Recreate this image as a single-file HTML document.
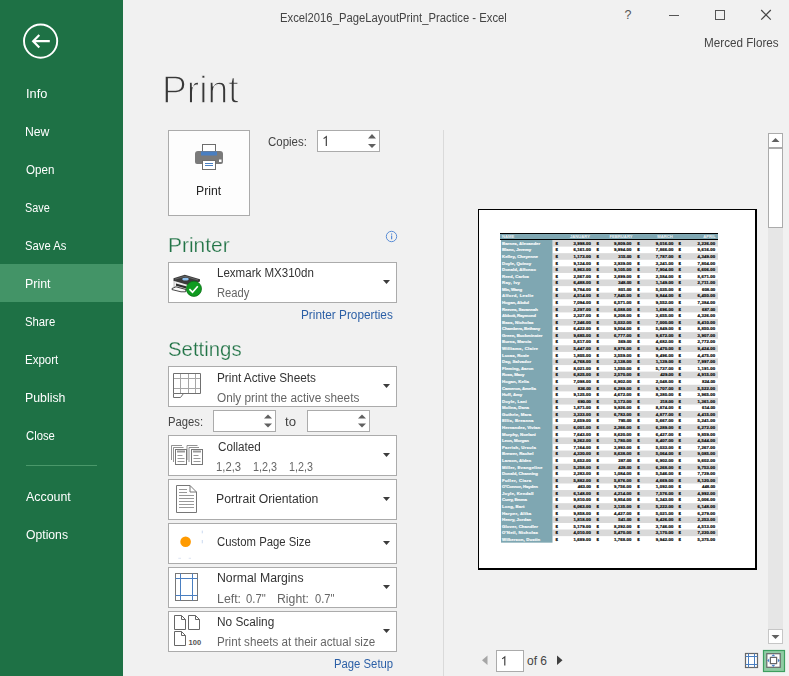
<!DOCTYPE html>
<html><head><meta charset="utf-8"><title>Print</title>
<style>
html,body{margin:0;padding:0;}
body{width:789px;height:676px;position:relative;overflow:hidden;background:#F1F1F1;font-family:"Liberation Sans", sans-serif;}
.t{position:absolute;white-space:nowrap;}
</style></head><body>
<div style="position:absolute;left:0;top:0;width:123px;height:676px;background:#1E7145"></div>
<div style="position:absolute;left:0;top:264px;width:123px;height:38px;background:#439467"></div>
<svg style="position:absolute;left:0;top:0" width="123" height="80"><circle cx="40.6" cy="41.1" r="16.6" fill="none" stroke="#fff" stroke-width="1.9"/><path d="M33.5 41.2 H49.8 M39.3 35 L33.2 41.2 L39.3 47.4" fill="none" stroke="#fff" stroke-width="2.2"/></svg>
<div class="t" id="sb0" style="left:25.60px;top:86.64px;font-size:12px;line-height:14px;color:#fff;transform:scaleX(1.0645);transform-origin:0 0;">Info</div>
<div class="t" id="sb1" style="left:25.28px;top:125.28px;font-size:12px;line-height:14px;color:#fff;transform:scaleX(1.0183);transform-origin:0 0;">New</div>
<div class="t" id="sb2" style="left:26.32px;top:163.20px;font-size:12px;line-height:14px;color:#fff;transform:scaleX(0.9655);transform-origin:0 0;">Open</div>
<div class="t" id="sb3" style="left:25.36px;top:201.36px;font-size:12px;line-height:14px;color:#fff;transform:scaleX(0.9052);transform-origin:0 0;">Save</div>
<div class="t" id="sb4" style="left:24.80px;top:238.64px;font-size:12px;line-height:14px;color:#fff;transform:scaleX(0.9373);transform-origin:0 0;">Save As</div>
<div class="t" id="sb5" style="left:25.28px;top:277.36px;font-size:12px;line-height:14px;color:#fff;transform:scaleX(1.0348);transform-origin:0 0;">Print</div>
<div class="t" id="sb6" style="left:25.28px;top:315.28px;font-size:12px;line-height:14px;color:#fff;transform:scaleX(0.9425);transform-origin:0 0;">Share</div>
<div class="t" id="sb7" style="left:25.28px;top:353.28px;font-size:12px;line-height:14px;color:#fff;transform:scaleX(0.9595);transform-origin:0 0;">Export</div>
<div class="t" id="sb8" style="left:25.28px;top:391.28px;font-size:12px;line-height:14px;color:#fff;transform:scaleX(1.0270);transform-origin:0 0;">Publish</div>
<div class="t" id="sb9" style="left:26.08px;top:429.28px;font-size:12px;line-height:14px;color:#fff;transform:scaleX(0.9403);transform-origin:0 0;">Close</div>
<div style="position:absolute;left:26px;top:465px;width:71px;height:1px;background:#4A986A"></div>
<div class="t" id="sbacc" style="left:26.00px;top:489.64px;font-size:12px;line-height:14px;color:#fff;transform:scaleX(1.0323);transform-origin:0 0;">Account</div>
<div class="t" id="sbopt" style="left:26.40px;top:527.64px;font-size:12px;line-height:14px;color:#fff;transform:scaleX(1.0149);transform-origin:0 0;">Options</div>
<div class="t" id="title" style="left:279.80px;top:10.54px;font-size:12px;line-height:14px;color:#444;transform:scaleX(0.9392);transform-origin:0 0;">Excel2016_PageLayoutPrint_Practice - Excel</div>
<div class="t" style="left:428.00px;width:400px;text-align:center;top:8.17px;font-size:12.5px;line-height:15px;color:#555;">?</div>
<svg style="position:absolute;left:660px;top:0" width="129" height="30"><path d="M9 15.5 H19" stroke="#555" stroke-width="1"/><rect x="55.5" y="10.5" width="9" height="9" fill="none" stroke="#555" stroke-width="1"/><path d="M101.2 10 L110.8 19.6 M110.8 10 L101.2 19.6" stroke="#444" stroke-width="1.2"/></svg>
<div class="t" id="user" style="left:704.20px;top:35.54px;font-size:12px;line-height:14px;color:#444;transform:scaleX(0.9739);transform-origin:0 0;">Merced Flores</div>
<div class="t" id="bigprint" style="left:161.60px;top:66.01px;font-size:39.5px;line-height:47px;color:#383838;transform:scaleX(0.9440);transform-origin:0 0;-webkit-text-stroke:1.3px #F1F1F1;">Print</div>
<div style="position:absolute;left:168px;top:130px;width:80px;height:84px;border:1px solid #ABABAB;background:#FDFDFD"></div>
<svg style="position:absolute;left:190px;top:140px" width="40" height="35">
<rect x="12.5" y="4.5" width="13" height="9" fill="#fff" stroke="#6d6d6d" stroke-width="1"/>
<path d="M8 11 H30 Q33 11 33 14 V22 Q33 24 31 24 H7 Q5 24 5 22 V14 Q5 11 8 11 Z" fill="#7a7a7a"/>
<rect x="11" y="11.5" width="16" height="4" fill="#4a7fc1"/>
<rect x="12.5" y="20.5" width="13" height="9" fill="#fff" stroke="#6d6d6d" stroke-width="1"/>
<path d="M15 23.5 H23 M15 25.5 H23" stroke="#4a7fc1" stroke-width="1"/>
<rect x="29" y="19.5" width="2.5" height="2.5" fill="#fff"/>
</svg>
<div class="t" id="btnprint" style="left:195.80px;top:183.87px;font-size:12.5px;line-height:15px;color:#262626;transform:scaleX(0.9772);transform-origin:0 0;">Print</div>
<div class="t" id="copies" style="left:267.80px;top:134.84px;font-size:12px;line-height:14px;color:#444;transform:scaleX(0.9553);transform-origin:0 0;">Copies:</div>
<div style="position:absolute;left:317px;top:130px;width:61px;height:20px;border:1px solid #ABABAB;background:#fff"></div>
<svg style="position:absolute;left:320px;top:134px" width="10" height="14"><path d="M3.6 4.6 L6.3 2.6 V12" fill="none" stroke="#3a3a3a" stroke-width="1.15"/></svg>
<svg style="position:absolute;left:365px;top:131px" width="14" height="20"><path d="M3 7.5 L7 3 L11 7.5 Z M3 13 L7 17 L11 13 Z" fill="#606060"/></svg>
<div style="position:absolute;left:443px;top:130px;width:1px;height:546px;background:#DADADA"></div>
<div class="t" id="hprinter" style="left:167.60px;top:231.82px;font-size:21px;line-height:25px;color:#217346;transform:scaleX(0.9972);transform-origin:0 0;-webkit-text-stroke:0.25px #F1F1F1;">Printer</div>
<svg style="position:absolute;left:384px;top:229px" width="15" height="15"><circle cx="7.5" cy="7.5" r="5.2" fill="none" stroke="#5A8DD6" stroke-width="1"/><rect x="7" y="6.5" width="1.2" height="3.8" fill="#5A8DD6"/><rect x="7" y="4.5" width="1.2" height="1.2" fill="#5A8DD6"/></svg>
<div style="position:absolute;left:168px;top:262px;width:227px;height:39px;border:1px solid #ABABAB;background:#fff"></div>
<svg style="position:absolute;left:382px;top:280px" width="10" height="6"><path d="M1 0 H8 L4.5 3.9 Z" fill="#3c3c3c"/></svg>
<svg style="position:absolute;left:168px;top:266px" width="40" height="34">
<path d="M6 21 L6 14 L21 18.5 L21 24.5 Z" fill="#eeeeee" stroke="#9a9a9a" stroke-width="0.6"/>
<path d="M8 17.5 L18 20.3 L18 22.6 L8 19.8 Z" fill="#2e2e2e"/>
<path d="M5.5 12.3 L16.8 8.8 L32 13.3 L32 15.6 L21 19.2 L5.5 14.8 Z" fill="#3b3b3b"/>
<path d="M7 13.2 L17 10.3 L30 14" fill="none" stroke="#777" stroke-width="0.7"/>
<ellipse cx="17.5" cy="13.2" rx="3.2" ry="1.4" fill="#8fc2f0"/>
<path d="M4 22.5 L8 20.8 L18 23.5 L17.5 25.8 L13 25.8 L4 23.6 Z" fill="#fafafa" stroke="#333" stroke-width="0.9"/>
<circle cx="25.9" cy="22.8" r="7.6" fill="#0f9b20" stroke="#0b6f17" stroke-width="0.8"/>
<path d="M21.4 23.2 L24.5 26.2 L29.8 20.2" fill="none" stroke="#fff" stroke-width="1.7"/>
</svg>
<div class="t" id="lex" style="left:216.60px;top:266.34px;font-size:12px;line-height:14px;color:#333;transform:scaleX(0.9617);transform-origin:0 0;">Lexmark MX310dn</div>
<div class="t" id="ready" style="left:217.00px;top:286.24px;font-size:12px;line-height:14px;color:#666;transform:scaleX(0.9356);transform-origin:0 0;">Ready</div>
<div class="t" id="pprops" style="left:301.20px;top:308.24px;font-size:12px;line-height:14px;color:#2B5FA6;transform:scaleX(0.9831);transform-origin:0 0;">Printer Properties</div>
<div class="t" id="hsettings" style="left:167.60px;top:336.22px;font-size:21px;line-height:25px;color:#217346;transform:scaleX(0.9704);transform-origin:0 0;-webkit-text-stroke:0.25px #F1F1F1;">Settings</div>
<div style="position:absolute;left:168px;top:366px;width:227px;height:39px;border:1px solid #ABABAB;background:#fff"></div>
<svg style="position:absolute;left:382px;top:384px" width="10" height="6"><path d="M1 0 H8 L4.5 3.9 Z" fill="#3c3c3c"/></svg>
<svg style="position:absolute;left:170px;top:370px" width="34" height="30">
<path d="M3.5 8.5 H30.5 M3.5 18.5 H30.5 M10.5 3.5 V23.5 M18.5 3.5 V23.5 M25.5 3.5 V23.5" stroke="#a6a6a6" stroke-width="1"/>
<path d="M3.5 3.5 H30.5 V23.5 H3.5 Z M3.5 23.5 V27.5 H10.5 L13.5 23.5" fill="none" stroke="#707070" stroke-width="1"/>
</svg>
<div class="t" id="pas" style="left:216.60px;top:371.04px;font-size:12px;line-height:14px;color:#333;transform:scaleX(0.9821);transform-origin:0 0;">Print Active Sheets</div>
<div class="t" id="opas" style="left:217.40px;top:391.04px;font-size:12px;line-height:14px;color:#666;transform:scaleX(0.9834);transform-origin:0 0;">Only print the active sheets</div>
<div class="t" id="pages" style="left:167.60px;top:414.84px;font-size:12px;line-height:14px;color:#444;transform:scaleX(0.9379);transform-origin:0 0;">Pages:</div>
<div style="position:absolute;left:213px;top:410px;width:61px;height:20px;border:1px solid #ABABAB;background:#fff"></div>
<svg style="position:absolute;left:261px;top:411px" width="14" height="20"><path d="M3 7.5 L7 3.5 L11 7.5 Z M3 12.5 L7 16.5 L11 12.5 Z" fill="#606060"/></svg>
<div style="position:absolute;left:307px;top:410px;width:61px;height:20px;border:1px solid #ABABAB;background:#fff"></div>
<svg style="position:absolute;left:355px;top:411px" width="14" height="20"><path d="M3 7.5 L7 3.5 L11 7.5 Z M3 12.5 L7 16.5 L11 12.5 Z" fill="#606060"/></svg>
<div class="t" id="to" style="left:285.40px;top:415.24px;font-size:12px;line-height:14px;color:#444;transform:scaleX(1.0996);transform-origin:0 0;">to</div>
<div style="position:absolute;left:168px;top:435px;width:227px;height:39px;border:1px solid #ABABAB;background:#fff"></div>
<svg style="position:absolute;left:382px;top:453px" width="10" height="6"><path d="M1 0 H8 L4.5 3.9 Z" fill="#3c3c3c"/></svg>
<svg style="position:absolute;left:170px;top:443px" width="36" height="25">
<g fill="none" stroke="#777" stroke-width="0.8">
<path d="M1.5 17 V2.5 H12"/><path d="M3.5 19 V4.5 H13.5"/><path d="M17 17 V2.5 H27.5"/><path d="M19 19 V4.5 H29"/>
</g>
<rect x="5.5" y="6.5" width="11" height="15" fill="#fff" stroke="#777" stroke-width="1"/>
<rect x="21.5" y="6.5" width="11" height="15" fill="#fff" stroke="#777" stroke-width="1"/>
<path d="M7 8.5 H15 M23 8.5 H31" stroke="#999" stroke-width="2"/><path d="M7.5 12.5 H12.5 M7.5 15.5 H14.5 M7.5 18.5 H14.5 M23.5 12.5 H28.5 M23.5 15.5 H30.5 M23.5 18.5 H30.5" stroke="#999" stroke-width="1"/>
</svg>
<div class="t" id="coll" style="left:217.80px;top:439.64px;font-size:12px;line-height:14px;color:#333;transform:scaleX(0.9727);transform-origin:0 0;">Collated</div>
<div class="t" id="c1" style="left:216.20px;top:459.64px;font-size:12px;line-height:14px;color:#666;transform:scaleX(0.9404);transform-origin:0 0;">1,2,3</div>
<div class="t" id="c2" style="left:253.00px;top:459.64px;font-size:12px;line-height:14px;color:#666;transform:scaleX(0.9016);transform-origin:0 0;">1,2,3</div>
<div class="t" id="c3" style="left:289.00px;top:459.64px;font-size:12px;line-height:14px;color:#666;transform:scaleX(0.8931);transform-origin:0 0;">1,2,3</div>
<div style="position:absolute;left:168px;top:479px;width:227px;height:39px;border:1px solid #ABABAB;background:#fff"></div>
<svg style="position:absolute;left:382px;top:497px" width="10" height="6"><path d="M1 0 H8 L4.5 3.9 Z" fill="#3c3c3c"/></svg>
<svg style="position:absolute;left:172px;top:482px" width="30" height="34">
<path d="M4.5 3.5 H18 L24.5 10 V30.5 H4.5 Z" fill="#fff" stroke="#777" stroke-width="1"/>
<path d="M18 3.5 V10 H24.5" fill="none" stroke="#777" stroke-width="1"/>
<path d="M7 7.5 H15 M7 10.5 H15 M7 13.5 H22 M7 16.5 H22 M7 19.5 H22 M7 22.5 H22 M7 25.5 H22" stroke="#999" stroke-width="1"/>
</svg>
<div class="t" id="port" style="left:216.20px;top:491.64px;font-size:12px;line-height:14px;color:#333;transform:scaleX(1.0162);transform-origin:0 0;">Portrait Orientation</div>
<div style="position:absolute;left:168px;top:523px;width:227px;height:39px;border:1px solid #ABABAB;background:#fff"></div>
<svg style="position:absolute;left:382px;top:541px" width="10" height="6"><path d="M1 0 H8 L4.5 3.9 Z" fill="#3c3c3c"/></svg>
<svg style="position:absolute;left:172px;top:527px" width="34" height="34"><circle cx="13.6" cy="14.7" r="5.3" fill="#FF9A00" style="filter:blur(0.35px)"/><path d="M30.3 3.6 V6.3 M30.3 13 V16.3" stroke="#b5c8ea" stroke-width="0.7"/><path d="M6.3 31.3 H9 M16.7 31.3 H19" stroke="#cfdaee" stroke-width="0.7"/></svg>
<div class="t" id="cps" style="left:217.40px;top:535.24px;font-size:12px;line-height:14px;color:#333;transform:scaleX(0.9430);transform-origin:0 0;">Custom Page Size</div>
<div style="position:absolute;left:168px;top:567px;width:227px;height:39px;border:1px solid #ABABAB;background:#fff"></div>
<svg style="position:absolute;left:382px;top:585px" width="10" height="6"><path d="M1 0 H8 L4.5 3.9 Z" fill="#3c3c3c"/></svg>
<svg style="position:absolute;left:172px;top:570px" width="30" height="34">
<rect x="3.5" y="3.5" width="22" height="27" fill="#fff" stroke="#777" stroke-width="1"/>
<path d="M8.5 3.5 V30.5 M20.5 3.5 V30.5 M3.5 8.5 H25.5 M3.5 25.5 H25.5" stroke="#4a7fc1" stroke-width="1"/>
</svg>
<div class="t" id="nm" style="left:216.60px;top:571.34px;font-size:12px;line-height:14px;color:#333;transform:scaleX(1.0216);transform-origin:0 0;">Normal Margins</div>
<div class="t" id="ml1" style="left:216.60px;top:591.64px;font-size:12px;line-height:14px;color:#666;transform:scaleX(1.0302);transform-origin:0 0;">Left:</div>
<div class="t" id="ml2" style="left:245.80px;top:591.64px;font-size:12px;line-height:14px;color:#666;transform:scaleX(0.9427);transform-origin:0 0;">0.7"</div>
<div class="t" id="ml3" style="left:277.20px;top:591.64px;font-size:12px;line-height:14px;color:#666;transform:scaleX(1.0206);transform-origin:0 0;">Right:</div>
<div class="t" id="ml4" style="left:315.00px;top:591.64px;font-size:12px;line-height:14px;color:#666;transform:scaleX(0.9256);transform-origin:0 0;">0.7"</div>
<div style="position:absolute;left:168px;top:611px;width:227px;height:39px;border:1px solid #ABABAB;background:#fff"></div>
<svg style="position:absolute;left:382px;top:629px" width="10" height="6"><path d="M1 0 H8 L4.5 3.9 Z" fill="#3c3c3c"/></svg>
<svg style="position:absolute;left:170px;top:612px" width="36" height="36">
<g fill="#fff" stroke="#666" stroke-width="1">
<path d="M4.5 3.5 H11.5 L15.5 7.5 V17.5 H4.5 Z M11.5 3.5 V7.5 H15.5"/><path d="M18.5 3.5 H25.5 L29.5 7.5 V17.5 H18.5 Z M25.5 3.5 V7.5 H29.5"/><path d="M4.5 19.5 H11.5 L15.5 23.5 V33.5 H4.5 Z M11.5 19.5 V23.5 H15.5"/>
</g>
<text x="18.6" y="33.2" font-family="Liberation Sans" font-size="7.6" font-weight="bold" fill="#555" textLength="12.6" lengthAdjust="spacingAndGlyphs">100</text>
</svg>
<div class="t" id="ns" style="left:216.60px;top:615.24px;font-size:12px;line-height:14px;color:#333;transform:scaleX(0.9863);transform-origin:0 0;">No Scaling</div>
<div class="t" id="psa" style="left:216.60px;top:634.94px;font-size:12px;line-height:14px;color:#666;transform:scaleX(0.9679);transform-origin:0 0;">Print sheets at their actual size</div>
<div class="t" id="psetup" style="left:333.60px;top:656.84px;font-size:12px;line-height:14px;color:#2B5FA6;transform:scaleX(0.9422);transform-origin:0 0;">Page Setup</div>
<div style="position:absolute;left:478px;top:209px;width:276px;height:358px;border:1px solid #000;border-right-width:2px;border-bottom-width:2px;background:#fff"></div>
<svg style="position:absolute;left:500px;top:233px" width="218" height="310.7" viewBox="0 0 218 310.7">
<rect x="0" y="0" width="218" height="7" fill="#7FA7B2"/>
<rect x="0" y="0" width="218" height="1" fill="#000"/>
<rect x="0" y="6" width="218" height="1" fill="#000"/>
<rect x="52.5" y="7.00" width="165.5" height="6.63" fill="#D9D9D9"/>
<rect x="52.5" y="20.16" width="165.5" height="6.63" fill="#D9D9D9"/>
<rect x="52.5" y="33.32" width="165.5" height="6.63" fill="#D9D9D9"/>
<rect x="52.5" y="46.48" width="165.5" height="6.63" fill="#D9D9D9"/>
<rect x="52.5" y="59.64" width="165.5" height="6.63" fill="#D9D9D9"/>
<rect x="52.5" y="72.80" width="165.5" height="6.63" fill="#D9D9D9"/>
<rect x="52.5" y="85.96" width="165.5" height="6.63" fill="#D9D9D9"/>
<rect x="52.5" y="99.12" width="165.5" height="6.63" fill="#D9D9D9"/>
<rect x="52.5" y="112.28" width="165.5" height="6.63" fill="#D9D9D9"/>
<rect x="52.5" y="125.44" width="165.5" height="6.63" fill="#D9D9D9"/>
<rect x="52.5" y="138.60" width="165.5" height="6.63" fill="#D9D9D9"/>
<rect x="52.5" y="151.76" width="165.5" height="6.63" fill="#D9D9D9"/>
<rect x="52.5" y="164.92" width="165.5" height="6.63" fill="#D9D9D9"/>
<rect x="52.5" y="178.08" width="165.5" height="6.63" fill="#D9D9D9"/>
<rect x="52.5" y="191.24" width="165.5" height="6.63" fill="#D9D9D9"/>
<rect x="52.5" y="204.40" width="165.5" height="6.63" fill="#D9D9D9"/>
<rect x="52.5" y="217.56" width="165.5" height="6.63" fill="#D9D9D9"/>
<rect x="52.5" y="230.72" width="165.5" height="6.63" fill="#D9D9D9"/>
<rect x="52.5" y="243.88" width="165.5" height="6.63" fill="#D9D9D9"/>
<rect x="52.5" y="257.04" width="165.5" height="6.63" fill="#D9D9D9"/>
<rect x="52.5" y="270.20" width="165.5" height="6.63" fill="#D9D9D9"/>
<rect x="52.5" y="283.36" width="165.5" height="6.63" fill="#D9D9D9"/>
<rect x="52.5" y="296.52" width="165.5" height="6.63" fill="#D9D9D9"/>
<rect x="1" y="7.0" width="51.5" height="302.68" fill="#7FA7B2"/>
<g font-family="Liberation Sans" font-weight="bold" font-size="4.6" stroke-width="0.22">
<text x="2" y="5.3" fill="#E8EEF0" font-size="4.2">NAME</text>
<text x="80" y="5.3" fill="#E8EEF0" font-size="4.2" text-anchor="middle">JANUARY</text>
<text x="121" y="5.3" fill="#E8EEF0" font-size="4.2" text-anchor="middle">FEBRUARY</text>
<text x="165" y="5.3" fill="#E8EEF0" font-size="4.2" text-anchor="middle">MARCH</text>
<text x="209.5" y="5.3" fill="#E8EEF0" font-size="4.2" text-anchor="middle">APRIL</text>
<text x="2" y="11.80" fill="#F4F7F8" stroke="#F4F7F8" font-size="4.3" textLength="38.2" lengthAdjust="spacing">Barnes, Alexander</text>
<text x="55.5" y="11.80" fill="#111" stroke="#111" font-size="4.3">$</text>
<text x="73.40" y="11.80" fill="#111" stroke="#111" font-size="4.3" textLength="17.60" lengthAdjust="spacing">3,998.00</text>
<text x="96.5" y="11.80" fill="#111" stroke="#111" font-size="4.3">$</text>
<text x="113.90" y="11.80" fill="#111" stroke="#111" font-size="4.3" textLength="17.60" lengthAdjust="spacing">9,809.00</text>
<text x="137.3" y="11.80" fill="#111" stroke="#111" font-size="4.3">$</text>
<text x="155.80" y="11.80" fill="#111" stroke="#111" font-size="4.3" textLength="17.60" lengthAdjust="spacing">9,016.00</text>
<text x="178.4" y="11.80" fill="#111" stroke="#111" font-size="4.3">$</text>
<text x="197.60" y="11.80" fill="#111" stroke="#111" font-size="4.3" textLength="17.60" lengthAdjust="spacing">2,236.00</text>
<text x="2" y="18.38" fill="#F4F7F8" stroke="#F4F7F8" font-size="4.3" textLength="29.2" lengthAdjust="spacing">Blanc, Jeremy</text>
<text x="55.5" y="18.38" fill="#111" stroke="#111" font-size="4.3">$</text>
<text x="73.40" y="18.38" fill="#111" stroke="#111" font-size="4.3" textLength="17.60" lengthAdjust="spacing">6,161.00</text>
<text x="96.5" y="18.38" fill="#111" stroke="#111" font-size="4.3">$</text>
<text x="113.90" y="18.38" fill="#111" stroke="#111" font-size="4.3" textLength="17.60" lengthAdjust="spacing">9,994.00</text>
<text x="137.3" y="18.38" fill="#111" stroke="#111" font-size="4.3">$</text>
<text x="155.80" y="18.38" fill="#111" stroke="#111" font-size="4.3" textLength="17.60" lengthAdjust="spacing">7,866.00</text>
<text x="178.4" y="18.38" fill="#111" stroke="#111" font-size="4.3">$</text>
<text x="197.60" y="18.38" fill="#111" stroke="#111" font-size="4.3" textLength="17.60" lengthAdjust="spacing">9,616.00</text>
<text x="2" y="24.96" fill="#F4F7F8" stroke="#F4F7F8" font-size="4.3" textLength="36.0" lengthAdjust="spacing">Kelley, Cheyenne</text>
<text x="55.5" y="24.96" fill="#111" stroke="#111" font-size="4.3">$</text>
<text x="73.40" y="24.96" fill="#111" stroke="#111" font-size="4.3" textLength="17.60" lengthAdjust="spacing">1,173.00</text>
<text x="96.5" y="24.96" fill="#111" stroke="#111" font-size="4.3">$</text>
<text x="118.30" y="24.96" fill="#111" stroke="#111" font-size="4.3" textLength="13.20" lengthAdjust="spacing">315.00</text>
<text x="137.3" y="24.96" fill="#111" stroke="#111" font-size="4.3">$</text>
<text x="155.80" y="24.96" fill="#111" stroke="#111" font-size="4.3" textLength="17.60" lengthAdjust="spacing">7,787.00</text>
<text x="178.4" y="24.96" fill="#111" stroke="#111" font-size="4.3">$</text>
<text x="197.60" y="24.96" fill="#111" stroke="#111" font-size="4.3" textLength="17.60" lengthAdjust="spacing">4,349.00</text>
<text x="2" y="31.54" fill="#F4F7F8" stroke="#F4F7F8" font-size="4.3" textLength="29.2" lengthAdjust="spacing">Doyle, Quincy</text>
<text x="55.5" y="31.54" fill="#111" stroke="#111" font-size="4.3">$</text>
<text x="73.40" y="31.54" fill="#111" stroke="#111" font-size="4.3" textLength="17.60" lengthAdjust="spacing">9,124.00</text>
<text x="96.5" y="31.54" fill="#111" stroke="#111" font-size="4.3">$</text>
<text x="113.90" y="31.54" fill="#111" stroke="#111" font-size="4.3" textLength="17.60" lengthAdjust="spacing">3,939.00</text>
<text x="137.3" y="31.54" fill="#111" stroke="#111" font-size="4.3">$</text>
<text x="155.80" y="31.54" fill="#111" stroke="#111" font-size="4.3" textLength="17.60" lengthAdjust="spacing">3,241.00</text>
<text x="178.4" y="31.54" fill="#111" stroke="#111" font-size="4.3">$</text>
<text x="197.60" y="31.54" fill="#111" stroke="#111" font-size="4.3" textLength="17.60" lengthAdjust="spacing">7,804.00</text>
<text x="2" y="38.12" fill="#F4F7F8" stroke="#F4F7F8" font-size="4.3" textLength="33.8" lengthAdjust="spacing">Donald, Alfonso</text>
<text x="55.5" y="38.12" fill="#111" stroke="#111" font-size="4.3">$</text>
<text x="73.40" y="38.12" fill="#111" stroke="#111" font-size="4.3" textLength="17.60" lengthAdjust="spacing">8,963.00</text>
<text x="96.5" y="38.12" fill="#111" stroke="#111" font-size="4.3">$</text>
<text x="113.90" y="38.12" fill="#111" stroke="#111" font-size="4.3" textLength="17.60" lengthAdjust="spacing">9,105.00</text>
<text x="137.3" y="38.12" fill="#111" stroke="#111" font-size="4.3">$</text>
<text x="155.80" y="38.12" fill="#111" stroke="#111" font-size="4.3" textLength="17.60" lengthAdjust="spacing">7,904.00</text>
<text x="178.4" y="38.12" fill="#111" stroke="#111" font-size="4.3">$</text>
<text x="197.60" y="38.12" fill="#111" stroke="#111" font-size="4.3" textLength="17.60" lengthAdjust="spacing">6,606.00</text>
<text x="2" y="44.70" fill="#F4F7F8" stroke="#F4F7F8" font-size="4.3" textLength="27.0" lengthAdjust="spacing">Reed, Carlos</text>
<text x="55.5" y="44.70" fill="#111" stroke="#111" font-size="4.3">$</text>
<text x="73.40" y="44.70" fill="#111" stroke="#111" font-size="4.3" textLength="17.60" lengthAdjust="spacing">2,567.00</text>
<text x="96.5" y="44.70" fill="#111" stroke="#111" font-size="4.3">$</text>
<text x="113.90" y="44.70" fill="#111" stroke="#111" font-size="4.3" textLength="17.60" lengthAdjust="spacing">3,899.00</text>
<text x="137.3" y="44.70" fill="#111" stroke="#111" font-size="4.3">$</text>
<text x="155.80" y="44.70" fill="#111" stroke="#111" font-size="4.3" textLength="17.60" lengthAdjust="spacing">2,584.00</text>
<text x="178.4" y="44.70" fill="#111" stroke="#111" font-size="4.3">$</text>
<text x="197.60" y="44.70" fill="#111" stroke="#111" font-size="4.3" textLength="17.60" lengthAdjust="spacing">8,671.00</text>
<text x="2" y="51.28" fill="#F4F7F8" stroke="#F4F7F8" font-size="4.3" textLength="18.0" lengthAdjust="spacing">Ray, Ivy</text>
<text x="55.5" y="51.28" fill="#111" stroke="#111" font-size="4.3">$</text>
<text x="73.40" y="51.28" fill="#111" stroke="#111" font-size="4.3" textLength="17.60" lengthAdjust="spacing">6,488.00</text>
<text x="96.5" y="51.28" fill="#111" stroke="#111" font-size="4.3">$</text>
<text x="118.30" y="51.28" fill="#111" stroke="#111" font-size="4.3" textLength="13.20" lengthAdjust="spacing">348.00</text>
<text x="137.3" y="51.28" fill="#111" stroke="#111" font-size="4.3">$</text>
<text x="155.80" y="51.28" fill="#111" stroke="#111" font-size="4.3" textLength="17.60" lengthAdjust="spacing">1,149.00</text>
<text x="178.4" y="51.28" fill="#111" stroke="#111" font-size="4.3">$</text>
<text x="197.60" y="51.28" fill="#111" stroke="#111" font-size="4.3" textLength="17.60" lengthAdjust="spacing">2,711.00</text>
<text x="2" y="57.86" fill="#F4F7F8" stroke="#F4F7F8" font-size="4.3" textLength="20.2" lengthAdjust="spacing">Min, Wang</text>
<text x="55.5" y="57.86" fill="#111" stroke="#111" font-size="4.3">$</text>
<text x="73.40" y="57.86" fill="#111" stroke="#111" font-size="4.3" textLength="17.60" lengthAdjust="spacing">9,784.00</text>
<text x="96.5" y="57.86" fill="#111" stroke="#111" font-size="4.3">$</text>
<text x="118.30" y="57.86" fill="#111" stroke="#111" font-size="4.3" textLength="13.20" lengthAdjust="spacing">801.00</text>
<text x="137.3" y="57.86" fill="#111" stroke="#111" font-size="4.3">$</text>
<text x="155.80" y="57.86" fill="#111" stroke="#111" font-size="4.3" textLength="17.60" lengthAdjust="spacing">5,035.00</text>
<text x="178.4" y="57.86" fill="#111" stroke="#111" font-size="4.3">$</text>
<text x="202.00" y="57.86" fill="#111" stroke="#111" font-size="4.3" textLength="13.20" lengthAdjust="spacing">608.00</text>
<text x="2" y="64.44" fill="#F4F7F8" stroke="#F4F7F8" font-size="4.3" textLength="31.5" lengthAdjust="spacing">Alford, Leslie</text>
<text x="55.5" y="64.44" fill="#111" stroke="#111" font-size="4.3">$</text>
<text x="73.40" y="64.44" fill="#111" stroke="#111" font-size="4.3" textLength="17.60" lengthAdjust="spacing">4,514.00</text>
<text x="96.5" y="64.44" fill="#111" stroke="#111" font-size="4.3">$</text>
<text x="113.90" y="64.44" fill="#111" stroke="#111" font-size="4.3" textLength="17.60" lengthAdjust="spacing">7,845.00</text>
<text x="137.3" y="64.44" fill="#111" stroke="#111" font-size="4.3">$</text>
<text x="155.80" y="64.44" fill="#111" stroke="#111" font-size="4.3" textLength="17.60" lengthAdjust="spacing">9,844.00</text>
<text x="178.4" y="64.44" fill="#111" stroke="#111" font-size="4.3">$</text>
<text x="197.60" y="64.44" fill="#111" stroke="#111" font-size="4.3" textLength="17.60" lengthAdjust="spacing">6,450.00</text>
<text x="2" y="71.02" fill="#F4F7F8" stroke="#F4F7F8" font-size="4.3" textLength="27.0" lengthAdjust="spacing">Hogan, Abdul</text>
<text x="55.5" y="71.02" fill="#111" stroke="#111" font-size="4.3">$</text>
<text x="73.40" y="71.02" fill="#111" stroke="#111" font-size="4.3" textLength="17.60" lengthAdjust="spacing">7,094.00</text>
<text x="96.5" y="71.02" fill="#111" stroke="#111" font-size="4.3">$</text>
<text x="113.90" y="71.02" fill="#111" stroke="#111" font-size="4.3" textLength="17.60" lengthAdjust="spacing">6,571.00</text>
<text x="137.3" y="71.02" fill="#111" stroke="#111" font-size="4.3">$</text>
<text x="155.80" y="71.02" fill="#111" stroke="#111" font-size="4.3" textLength="17.60" lengthAdjust="spacing">9,552.00</text>
<text x="178.4" y="71.02" fill="#111" stroke="#111" font-size="4.3">$</text>
<text x="197.60" y="71.02" fill="#111" stroke="#111" font-size="4.3" textLength="17.60" lengthAdjust="spacing">7,384.00</text>
<text x="2" y="77.60" fill="#F4F7F8" stroke="#F4F7F8" font-size="4.3" textLength="36.0" lengthAdjust="spacing">Reeves, Savannah</text>
<text x="55.5" y="77.60" fill="#111" stroke="#111" font-size="4.3">$</text>
<text x="73.40" y="77.60" fill="#111" stroke="#111" font-size="4.3" textLength="17.60" lengthAdjust="spacing">2,297.00</text>
<text x="96.5" y="77.60" fill="#111" stroke="#111" font-size="4.3">$</text>
<text x="113.90" y="77.60" fill="#111" stroke="#111" font-size="4.3" textLength="17.60" lengthAdjust="spacing">6,088.00</text>
<text x="137.3" y="77.60" fill="#111" stroke="#111" font-size="4.3">$</text>
<text x="155.80" y="77.60" fill="#111" stroke="#111" font-size="4.3" textLength="17.60" lengthAdjust="spacing">1,696.00</text>
<text x="178.4" y="77.60" fill="#111" stroke="#111" font-size="4.3">$</text>
<text x="202.00" y="77.60" fill="#111" stroke="#111" font-size="4.3" textLength="13.20" lengthAdjust="spacing">687.00</text>
<text x="2" y="84.18" fill="#F4F7F8" stroke="#F4F7F8" font-size="4.3" textLength="33.8" lengthAdjust="spacing">Abbott, Raymond</text>
<text x="55.5" y="84.18" fill="#111" stroke="#111" font-size="4.3">$</text>
<text x="73.40" y="84.18" fill="#111" stroke="#111" font-size="4.3" textLength="17.60" lengthAdjust="spacing">2,327.00</text>
<text x="96.5" y="84.18" fill="#111" stroke="#111" font-size="4.3">$</text>
<text x="113.90" y="84.18" fill="#111" stroke="#111" font-size="4.3" textLength="17.60" lengthAdjust="spacing">8,208.00</text>
<text x="137.3" y="84.18" fill="#111" stroke="#111" font-size="4.3">$</text>
<text x="155.80" y="84.18" fill="#111" stroke="#111" font-size="4.3" textLength="17.60" lengthAdjust="spacing">3,655.00</text>
<text x="178.4" y="84.18" fill="#111" stroke="#111" font-size="4.3">$</text>
<text x="197.60" y="84.18" fill="#111" stroke="#111" font-size="4.3" textLength="17.60" lengthAdjust="spacing">4,326.00</text>
<text x="2" y="90.76" fill="#F4F7F8" stroke="#F4F7F8" font-size="4.3" textLength="31.5" lengthAdjust="spacing">Bass, Nicholas</text>
<text x="55.5" y="90.76" fill="#111" stroke="#111" font-size="4.3">$</text>
<text x="73.40" y="90.76" fill="#111" stroke="#111" font-size="4.3" textLength="17.60" lengthAdjust="spacing">7,246.00</text>
<text x="96.5" y="90.76" fill="#111" stroke="#111" font-size="4.3">$</text>
<text x="113.90" y="90.76" fill="#111" stroke="#111" font-size="4.3" textLength="17.60" lengthAdjust="spacing">5,032.00</text>
<text x="137.3" y="90.76" fill="#111" stroke="#111" font-size="4.3">$</text>
<text x="155.80" y="90.76" fill="#111" stroke="#111" font-size="4.3" textLength="17.60" lengthAdjust="spacing">7,000.00</text>
<text x="178.4" y="90.76" fill="#111" stroke="#111" font-size="4.3">$</text>
<text x="197.60" y="90.76" fill="#111" stroke="#111" font-size="4.3" textLength="17.60" lengthAdjust="spacing">8,410.00</text>
<text x="2" y="97.34" fill="#F4F7F8" stroke="#F4F7F8" font-size="4.3" textLength="38.2" lengthAdjust="spacing">Chambers, Bethany</text>
<text x="55.5" y="97.34" fill="#111" stroke="#111" font-size="4.3">$</text>
<text x="73.40" y="97.34" fill="#111" stroke="#111" font-size="4.3" textLength="17.60" lengthAdjust="spacing">6,422.00</text>
<text x="96.5" y="97.34" fill="#111" stroke="#111" font-size="4.3">$</text>
<text x="113.90" y="97.34" fill="#111" stroke="#111" font-size="4.3" textLength="17.60" lengthAdjust="spacing">9,504.00</text>
<text x="137.3" y="97.34" fill="#111" stroke="#111" font-size="4.3">$</text>
<text x="155.80" y="97.34" fill="#111" stroke="#111" font-size="4.3" textLength="17.60" lengthAdjust="spacing">5,849.00</text>
<text x="178.4" y="97.34" fill="#111" stroke="#111" font-size="4.3">$</text>
<text x="197.60" y="97.34" fill="#111" stroke="#111" font-size="4.3" textLength="17.60" lengthAdjust="spacing">8,850.00</text>
<text x="2" y="103.92" fill="#F4F7F8" stroke="#F4F7F8" font-size="4.3" textLength="40.5" lengthAdjust="spacing">Green, Buckminster</text>
<text x="55.5" y="103.92" fill="#111" stroke="#111" font-size="4.3">$</text>
<text x="73.40" y="103.92" fill="#111" stroke="#111" font-size="4.3" textLength="17.60" lengthAdjust="spacing">9,685.00</text>
<text x="96.5" y="103.92" fill="#111" stroke="#111" font-size="4.3">$</text>
<text x="113.90" y="103.92" fill="#111" stroke="#111" font-size="4.3" textLength="17.60" lengthAdjust="spacing">6,777.00</text>
<text x="137.3" y="103.92" fill="#111" stroke="#111" font-size="4.3">$</text>
<text x="155.80" y="103.92" fill="#111" stroke="#111" font-size="4.3" textLength="17.60" lengthAdjust="spacing">9,672.00</text>
<text x="178.4" y="103.92" fill="#111" stroke="#111" font-size="4.3">$</text>
<text x="197.60" y="103.92" fill="#111" stroke="#111" font-size="4.3" textLength="17.60" lengthAdjust="spacing">3,907.00</text>
<text x="2" y="110.50" fill="#F4F7F8" stroke="#F4F7F8" font-size="4.3" textLength="29.2" lengthAdjust="spacing">Burns, Marcia</text>
<text x="55.5" y="110.50" fill="#111" stroke="#111" font-size="4.3">$</text>
<text x="73.40" y="110.50" fill="#111" stroke="#111" font-size="4.3" textLength="17.60" lengthAdjust="spacing">5,617.00</text>
<text x="96.5" y="110.50" fill="#111" stroke="#111" font-size="4.3">$</text>
<text x="118.30" y="110.50" fill="#111" stroke="#111" font-size="4.3" textLength="13.20" lengthAdjust="spacing">569.00</text>
<text x="137.3" y="110.50" fill="#111" stroke="#111" font-size="4.3">$</text>
<text x="155.80" y="110.50" fill="#111" stroke="#111" font-size="4.3" textLength="17.60" lengthAdjust="spacing">4,682.00</text>
<text x="178.4" y="110.50" fill="#111" stroke="#111" font-size="4.3">$</text>
<text x="197.60" y="110.50" fill="#111" stroke="#111" font-size="4.3" textLength="17.60" lengthAdjust="spacing">2,772.00</text>
<text x="2" y="117.08" fill="#F4F7F8" stroke="#F4F7F8" font-size="4.3" textLength="36.0" lengthAdjust="spacing">Williams, Claire</text>
<text x="55.5" y="117.08" fill="#111" stroke="#111" font-size="4.3">$</text>
<text x="73.40" y="117.08" fill="#111" stroke="#111" font-size="4.3" textLength="17.60" lengthAdjust="spacing">5,447.00</text>
<text x="96.5" y="117.08" fill="#111" stroke="#111" font-size="4.3">$</text>
<text x="113.90" y="117.08" fill="#111" stroke="#111" font-size="4.3" textLength="17.60" lengthAdjust="spacing">8,976.00</text>
<text x="137.3" y="117.08" fill="#111" stroke="#111" font-size="4.3">$</text>
<text x="155.80" y="117.08" fill="#111" stroke="#111" font-size="4.3" textLength="17.60" lengthAdjust="spacing">9,470.00</text>
<text x="178.4" y="117.08" fill="#111" stroke="#111" font-size="4.3">$</text>
<text x="197.60" y="117.08" fill="#111" stroke="#111" font-size="4.3" textLength="17.60" lengthAdjust="spacing">9,424.00</text>
<text x="2" y="123.66" fill="#F4F7F8" stroke="#F4F7F8" font-size="4.3" textLength="27.0" lengthAdjust="spacing">Lucas, Rosie</text>
<text x="55.5" y="123.66" fill="#111" stroke="#111" font-size="4.3">$</text>
<text x="73.40" y="123.66" fill="#111" stroke="#111" font-size="4.3" textLength="17.60" lengthAdjust="spacing">1,805.00</text>
<text x="96.5" y="123.66" fill="#111" stroke="#111" font-size="4.3">$</text>
<text x="113.90" y="123.66" fill="#111" stroke="#111" font-size="4.3" textLength="17.60" lengthAdjust="spacing">3,559.00</text>
<text x="137.3" y="123.66" fill="#111" stroke="#111" font-size="4.3">$</text>
<text x="155.80" y="123.66" fill="#111" stroke="#111" font-size="4.3" textLength="17.60" lengthAdjust="spacing">9,496.00</text>
<text x="178.4" y="123.66" fill="#111" stroke="#111" font-size="4.3">$</text>
<text x="197.60" y="123.66" fill="#111" stroke="#111" font-size="4.3" textLength="17.60" lengthAdjust="spacing">4,475.00</text>
<text x="2" y="130.24" fill="#F4F7F8" stroke="#F4F7F8" font-size="4.3" textLength="29.2" lengthAdjust="spacing">Day, Salvador</text>
<text x="55.5" y="130.24" fill="#111" stroke="#111" font-size="4.3">$</text>
<text x="73.40" y="130.24" fill="#111" stroke="#111" font-size="4.3" textLength="17.60" lengthAdjust="spacing">4,768.00</text>
<text x="96.5" y="130.24" fill="#111" stroke="#111" font-size="4.3">$</text>
<text x="113.90" y="130.24" fill="#111" stroke="#111" font-size="4.3" textLength="17.60" lengthAdjust="spacing">2,138.00</text>
<text x="137.3" y="130.24" fill="#111" stroke="#111" font-size="4.3">$</text>
<text x="155.80" y="130.24" fill="#111" stroke="#111" font-size="4.3" textLength="17.60" lengthAdjust="spacing">1,139.00</text>
<text x="178.4" y="130.24" fill="#111" stroke="#111" font-size="4.3">$</text>
<text x="197.60" y="130.24" fill="#111" stroke="#111" font-size="4.3" textLength="17.60" lengthAdjust="spacing">7,997.00</text>
<text x="2" y="136.82" fill="#F4F7F8" stroke="#F4F7F8" font-size="4.3" textLength="31.5" lengthAdjust="spacing">Fleming, Aaron</text>
<text x="55.5" y="136.82" fill="#111" stroke="#111" font-size="4.3">$</text>
<text x="73.40" y="136.82" fill="#111" stroke="#111" font-size="4.3" textLength="17.60" lengthAdjust="spacing">8,021.00</text>
<text x="96.5" y="136.82" fill="#111" stroke="#111" font-size="4.3">$</text>
<text x="113.90" y="136.82" fill="#111" stroke="#111" font-size="4.3" textLength="17.60" lengthAdjust="spacing">1,550.00</text>
<text x="137.3" y="136.82" fill="#111" stroke="#111" font-size="4.3">$</text>
<text x="155.80" y="136.82" fill="#111" stroke="#111" font-size="4.3" textLength="17.60" lengthAdjust="spacing">5,737.00</text>
<text x="178.4" y="136.82" fill="#111" stroke="#111" font-size="4.3">$</text>
<text x="197.60" y="136.82" fill="#111" stroke="#111" font-size="4.3" textLength="17.60" lengthAdjust="spacing">1,191.00</text>
<text x="2" y="143.40" fill="#F4F7F8" stroke="#F4F7F8" font-size="4.3" textLength="22.5" lengthAdjust="spacing">Ross, Macy</text>
<text x="55.5" y="143.40" fill="#111" stroke="#111" font-size="4.3">$</text>
<text x="73.40" y="143.40" fill="#111" stroke="#111" font-size="4.3" textLength="17.60" lengthAdjust="spacing">6,825.00</text>
<text x="96.5" y="143.40" fill="#111" stroke="#111" font-size="4.3">$</text>
<text x="113.90" y="143.40" fill="#111" stroke="#111" font-size="4.3" textLength="17.60" lengthAdjust="spacing">2,570.00</text>
<text x="137.3" y="143.40" fill="#111" stroke="#111" font-size="4.3">$</text>
<text x="160.20" y="143.40" fill="#111" stroke="#111" font-size="4.3" textLength="13.20" lengthAdjust="spacing">429.00</text>
<text x="178.4" y="143.40" fill="#111" stroke="#111" font-size="4.3">$</text>
<text x="197.60" y="143.40" fill="#111" stroke="#111" font-size="4.3" textLength="17.60" lengthAdjust="spacing">4,915.00</text>
<text x="2" y="149.98" fill="#F4F7F8" stroke="#F4F7F8" font-size="4.3" textLength="27.0" lengthAdjust="spacing">Hogan, Kelia</text>
<text x="55.5" y="149.98" fill="#111" stroke="#111" font-size="4.3">$</text>
<text x="73.40" y="149.98" fill="#111" stroke="#111" font-size="4.3" textLength="17.60" lengthAdjust="spacing">7,098.00</text>
<text x="96.5" y="149.98" fill="#111" stroke="#111" font-size="4.3">$</text>
<text x="113.90" y="149.98" fill="#111" stroke="#111" font-size="4.3" textLength="17.60" lengthAdjust="spacing">6,902.00</text>
<text x="137.3" y="149.98" fill="#111" stroke="#111" font-size="4.3">$</text>
<text x="155.80" y="149.98" fill="#111" stroke="#111" font-size="4.3" textLength="17.60" lengthAdjust="spacing">2,048.00</text>
<text x="178.4" y="149.98" fill="#111" stroke="#111" font-size="4.3">$</text>
<text x="202.00" y="149.98" fill="#111" stroke="#111" font-size="4.3" textLength="13.20" lengthAdjust="spacing">824.00</text>
<text x="2" y="156.56" fill="#F4F7F8" stroke="#F4F7F8" font-size="4.3" textLength="33.8" lengthAdjust="spacing">Cameron, Amelia</text>
<text x="55.5" y="156.56" fill="#111" stroke="#111" font-size="4.3">$</text>
<text x="77.80" y="156.56" fill="#111" stroke="#111" font-size="4.3" textLength="13.20" lengthAdjust="spacing">836.00</text>
<text x="96.5" y="156.56" fill="#111" stroke="#111" font-size="4.3">$</text>
<text x="113.90" y="156.56" fill="#111" stroke="#111" font-size="4.3" textLength="17.60" lengthAdjust="spacing">6,289.00</text>
<text x="137.3" y="156.56" fill="#111" stroke="#111" font-size="4.3">$</text>
<text x="155.80" y="156.56" fill="#111" stroke="#111" font-size="4.3" textLength="17.60" lengthAdjust="spacing">9,707.00</text>
<text x="178.4" y="156.56" fill="#111" stroke="#111" font-size="4.3">$</text>
<text x="197.60" y="156.56" fill="#111" stroke="#111" font-size="4.3" textLength="17.60" lengthAdjust="spacing">5,522.00</text>
<text x="2" y="163.14" fill="#F4F7F8" stroke="#F4F7F8" font-size="4.3" textLength="20.2" lengthAdjust="spacing">Huff, Amy</text>
<text x="55.5" y="163.14" fill="#111" stroke="#111" font-size="4.3">$</text>
<text x="73.40" y="163.14" fill="#111" stroke="#111" font-size="4.3" textLength="17.60" lengthAdjust="spacing">9,125.00</text>
<text x="96.5" y="163.14" fill="#111" stroke="#111" font-size="4.3">$</text>
<text x="113.90" y="163.14" fill="#111" stroke="#111" font-size="4.3" textLength="17.60" lengthAdjust="spacing">4,672.00</text>
<text x="137.3" y="163.14" fill="#111" stroke="#111" font-size="4.3">$</text>
<text x="155.80" y="163.14" fill="#111" stroke="#111" font-size="4.3" textLength="17.60" lengthAdjust="spacing">8,380.00</text>
<text x="178.4" y="163.14" fill="#111" stroke="#111" font-size="4.3">$</text>
<text x="197.60" y="163.14" fill="#111" stroke="#111" font-size="4.3" textLength="17.60" lengthAdjust="spacing">3,965.00</text>
<text x="2" y="169.72" fill="#F4F7F8" stroke="#F4F7F8" font-size="4.3" textLength="24.8" lengthAdjust="spacing">Doyle, Lani</text>
<text x="55.5" y="169.72" fill="#111" stroke="#111" font-size="4.3">$</text>
<text x="77.80" y="169.72" fill="#111" stroke="#111" font-size="4.3" textLength="13.20" lengthAdjust="spacing">690.00</text>
<text x="96.5" y="169.72" fill="#111" stroke="#111" font-size="4.3">$</text>
<text x="113.90" y="169.72" fill="#111" stroke="#111" font-size="4.3" textLength="17.60" lengthAdjust="spacing">5,173.00</text>
<text x="137.3" y="169.72" fill="#111" stroke="#111" font-size="4.3">$</text>
<text x="160.20" y="169.72" fill="#111" stroke="#111" font-size="4.3" textLength="13.20" lengthAdjust="spacing">218.00</text>
<text x="178.4" y="169.72" fill="#111" stroke="#111" font-size="4.3">$</text>
<text x="197.60" y="169.72" fill="#111" stroke="#111" font-size="4.3" textLength="17.60" lengthAdjust="spacing">1,361.00</text>
<text x="2" y="176.30" fill="#F4F7F8" stroke="#F4F7F8" font-size="4.3" textLength="27.0" lengthAdjust="spacing">Molina, Dana</text>
<text x="55.5" y="176.30" fill="#111" stroke="#111" font-size="4.3">$</text>
<text x="73.40" y="176.30" fill="#111" stroke="#111" font-size="4.3" textLength="17.60" lengthAdjust="spacing">1,871.00</text>
<text x="96.5" y="176.30" fill="#111" stroke="#111" font-size="4.3">$</text>
<text x="113.90" y="176.30" fill="#111" stroke="#111" font-size="4.3" textLength="17.60" lengthAdjust="spacing">9,926.00</text>
<text x="137.3" y="176.30" fill="#111" stroke="#111" font-size="4.3">$</text>
<text x="155.80" y="176.30" fill="#111" stroke="#111" font-size="4.3" textLength="17.60" lengthAdjust="spacing">8,874.00</text>
<text x="178.4" y="176.30" fill="#111" stroke="#111" font-size="4.3">$</text>
<text x="202.00" y="176.30" fill="#111" stroke="#111" font-size="4.3" textLength="13.20" lengthAdjust="spacing">614.00</text>
<text x="2" y="182.88" fill="#F4F7F8" stroke="#F4F7F8" font-size="4.3" textLength="29.2" lengthAdjust="spacing">Guthrie, Mara</text>
<text x="55.5" y="182.88" fill="#111" stroke="#111" font-size="4.3">$</text>
<text x="73.40" y="182.88" fill="#111" stroke="#111" font-size="4.3" textLength="17.60" lengthAdjust="spacing">3,333.00</text>
<text x="96.5" y="182.88" fill="#111" stroke="#111" font-size="4.3">$</text>
<text x="113.90" y="182.88" fill="#111" stroke="#111" font-size="4.3" textLength="17.60" lengthAdjust="spacing">6,783.00</text>
<text x="137.3" y="182.88" fill="#111" stroke="#111" font-size="4.3">$</text>
<text x="155.80" y="182.88" fill="#111" stroke="#111" font-size="4.3" textLength="17.60" lengthAdjust="spacing">4,877.00</text>
<text x="178.4" y="182.88" fill="#111" stroke="#111" font-size="4.3">$</text>
<text x="197.60" y="182.88" fill="#111" stroke="#111" font-size="4.3" textLength="17.60" lengthAdjust="spacing">4,415.00</text>
<text x="2" y="189.46" fill="#F4F7F8" stroke="#F4F7F8" font-size="4.3" textLength="31.5" lengthAdjust="spacing">Ellis, Breanna</text>
<text x="55.5" y="189.46" fill="#111" stroke="#111" font-size="4.3">$</text>
<text x="73.40" y="189.46" fill="#111" stroke="#111" font-size="4.3" textLength="17.60" lengthAdjust="spacing">2,659.00</text>
<text x="96.5" y="189.46" fill="#111" stroke="#111" font-size="4.3">$</text>
<text x="118.30" y="189.46" fill="#111" stroke="#111" font-size="4.3" textLength="13.20" lengthAdjust="spacing">795.00</text>
<text x="137.3" y="189.46" fill="#111" stroke="#111" font-size="4.3">$</text>
<text x="155.80" y="189.46" fill="#111" stroke="#111" font-size="4.3" textLength="17.60" lengthAdjust="spacing">5,667.00</text>
<text x="178.4" y="189.46" fill="#111" stroke="#111" font-size="4.3">$</text>
<text x="197.60" y="189.46" fill="#111" stroke="#111" font-size="4.3" textLength="17.60" lengthAdjust="spacing">5,241.00</text>
<text x="2" y="196.04" fill="#F4F7F8" stroke="#F4F7F8" font-size="4.3" textLength="38.2" lengthAdjust="spacing">Hernandez, Vivian</text>
<text x="55.5" y="196.04" fill="#111" stroke="#111" font-size="4.3">$</text>
<text x="73.40" y="196.04" fill="#111" stroke="#111" font-size="4.3" textLength="17.60" lengthAdjust="spacing">6,001.00</text>
<text x="96.5" y="196.04" fill="#111" stroke="#111" font-size="4.3">$</text>
<text x="113.90" y="196.04" fill="#111" stroke="#111" font-size="4.3" textLength="17.60" lengthAdjust="spacing">2,366.00</text>
<text x="137.3" y="196.04" fill="#111" stroke="#111" font-size="4.3">$</text>
<text x="155.80" y="196.04" fill="#111" stroke="#111" font-size="4.3" textLength="17.60" lengthAdjust="spacing">6,289.00</text>
<text x="178.4" y="196.04" fill="#111" stroke="#111" font-size="4.3">$</text>
<text x="197.60" y="196.04" fill="#111" stroke="#111" font-size="4.3" textLength="17.60" lengthAdjust="spacing">6,272.00</text>
<text x="2" y="202.62" fill="#F4F7F8" stroke="#F4F7F8" font-size="4.3" textLength="33.8" lengthAdjust="spacing">Murphy, Noelani</text>
<text x="55.5" y="202.62" fill="#111" stroke="#111" font-size="4.3">$</text>
<text x="73.40" y="202.62" fill="#111" stroke="#111" font-size="4.3" textLength="17.60" lengthAdjust="spacing">7,643.00</text>
<text x="96.5" y="202.62" fill="#111" stroke="#111" font-size="4.3">$</text>
<text x="113.90" y="202.62" fill="#111" stroke="#111" font-size="4.3" textLength="17.60" lengthAdjust="spacing">8,620.00</text>
<text x="137.3" y="202.62" fill="#111" stroke="#111" font-size="4.3">$</text>
<text x="155.80" y="202.62" fill="#111" stroke="#111" font-size="4.3" textLength="17.60" lengthAdjust="spacing">6,427.00</text>
<text x="178.4" y="202.62" fill="#111" stroke="#111" font-size="4.3">$</text>
<text x="197.60" y="202.62" fill="#111" stroke="#111" font-size="4.3" textLength="17.60" lengthAdjust="spacing">9,859.00</text>
<text x="2" y="209.20" fill="#F4F7F8" stroke="#F4F7F8" font-size="4.3" textLength="27.0" lengthAdjust="spacing">Leon, Morgan</text>
<text x="55.5" y="209.20" fill="#111" stroke="#111" font-size="4.3">$</text>
<text x="73.40" y="209.20" fill="#111" stroke="#111" font-size="4.3" textLength="17.60" lengthAdjust="spacing">9,262.00</text>
<text x="96.5" y="209.20" fill="#111" stroke="#111" font-size="4.3">$</text>
<text x="113.90" y="209.20" fill="#111" stroke="#111" font-size="4.3" textLength="17.60" lengthAdjust="spacing">1,780.00</text>
<text x="137.3" y="209.20" fill="#111" stroke="#111" font-size="4.3">$</text>
<text x="155.80" y="209.20" fill="#111" stroke="#111" font-size="4.3" textLength="17.60" lengthAdjust="spacing">8,407.00</text>
<text x="178.4" y="209.20" fill="#111" stroke="#111" font-size="4.3">$</text>
<text x="197.60" y="209.20" fill="#111" stroke="#111" font-size="4.3" textLength="17.60" lengthAdjust="spacing">4,544.00</text>
<text x="2" y="215.78" fill="#F4F7F8" stroke="#F4F7F8" font-size="4.3" textLength="33.8" lengthAdjust="spacing">Parrish, Ursula</text>
<text x="55.5" y="215.78" fill="#111" stroke="#111" font-size="4.3">$</text>
<text x="73.40" y="215.78" fill="#111" stroke="#111" font-size="4.3" textLength="17.60" lengthAdjust="spacing">7,164.00</text>
<text x="96.5" y="215.78" fill="#111" stroke="#111" font-size="4.3">$</text>
<text x="113.90" y="215.78" fill="#111" stroke="#111" font-size="4.3" textLength="17.60" lengthAdjust="spacing">3,993.00</text>
<text x="137.3" y="215.78" fill="#111" stroke="#111" font-size="4.3">$</text>
<text x="155.80" y="215.78" fill="#111" stroke="#111" font-size="4.3" textLength="17.60" lengthAdjust="spacing">5,033.00</text>
<text x="178.4" y="215.78" fill="#111" stroke="#111" font-size="4.3">$</text>
<text x="197.60" y="215.78" fill="#111" stroke="#111" font-size="4.3" textLength="17.60" lengthAdjust="spacing">7,267.00</text>
<text x="2" y="222.36" fill="#F4F7F8" stroke="#F4F7F8" font-size="4.3" textLength="31.5" lengthAdjust="spacing">Brewer, Rachel</text>
<text x="55.5" y="222.36" fill="#111" stroke="#111" font-size="4.3">$</text>
<text x="73.40" y="222.36" fill="#111" stroke="#111" font-size="4.3" textLength="17.60" lengthAdjust="spacing">4,330.00</text>
<text x="96.5" y="222.36" fill="#111" stroke="#111" font-size="4.3">$</text>
<text x="113.90" y="222.36" fill="#111" stroke="#111" font-size="4.3" textLength="17.60" lengthAdjust="spacing">8,638.00</text>
<text x="137.3" y="222.36" fill="#111" stroke="#111" font-size="4.3">$</text>
<text x="155.80" y="222.36" fill="#111" stroke="#111" font-size="4.3" textLength="17.60" lengthAdjust="spacing">5,064.00</text>
<text x="178.4" y="222.36" fill="#111" stroke="#111" font-size="4.3">$</text>
<text x="197.60" y="222.36" fill="#111" stroke="#111" font-size="4.3" textLength="17.60" lengthAdjust="spacing">9,085.00</text>
<text x="2" y="228.94" fill="#F4F7F8" stroke="#F4F7F8" font-size="4.3" textLength="29.2" lengthAdjust="spacing">Larson, Alden</text>
<text x="55.5" y="228.94" fill="#111" stroke="#111" font-size="4.3">$</text>
<text x="73.40" y="228.94" fill="#111" stroke="#111" font-size="4.3" textLength="17.60" lengthAdjust="spacing">5,652.00</text>
<text x="96.5" y="228.94" fill="#111" stroke="#111" font-size="4.3">$</text>
<text x="118.30" y="228.94" fill="#111" stroke="#111" font-size="4.3" textLength="13.20" lengthAdjust="spacing">287.00</text>
<text x="137.3" y="228.94" fill="#111" stroke="#111" font-size="4.3">$</text>
<text x="155.80" y="228.94" fill="#111" stroke="#111" font-size="4.3" textLength="17.60" lengthAdjust="spacing">6,902.00</text>
<text x="178.4" y="228.94" fill="#111" stroke="#111" font-size="4.3">$</text>
<text x="197.60" y="228.94" fill="#111" stroke="#111" font-size="4.3" textLength="17.60" lengthAdjust="spacing">9,602.00</text>
<text x="2" y="235.52" fill="#F4F7F8" stroke="#F4F7F8" font-size="4.3" textLength="40.5" lengthAdjust="spacing">Miller, Evangeline</text>
<text x="55.5" y="235.52" fill="#111" stroke="#111" font-size="4.3">$</text>
<text x="73.40" y="235.52" fill="#111" stroke="#111" font-size="4.3" textLength="17.60" lengthAdjust="spacing">5,258.00</text>
<text x="96.5" y="235.52" fill="#111" stroke="#111" font-size="4.3">$</text>
<text x="118.30" y="235.52" fill="#111" stroke="#111" font-size="4.3" textLength="13.20" lengthAdjust="spacing">428.00</text>
<text x="137.3" y="235.52" fill="#111" stroke="#111" font-size="4.3">$</text>
<text x="155.80" y="235.52" fill="#111" stroke="#111" font-size="4.3" textLength="17.60" lengthAdjust="spacing">6,268.00</text>
<text x="178.4" y="235.52" fill="#111" stroke="#111" font-size="4.3">$</text>
<text x="197.60" y="235.52" fill="#111" stroke="#111" font-size="4.3" textLength="17.60" lengthAdjust="spacing">9,753.00</text>
<text x="2" y="242.10" fill="#F4F7F8" stroke="#F4F7F8" font-size="4.3" textLength="36.0" lengthAdjust="spacing">Donald, Channing</text>
<text x="55.5" y="242.10" fill="#111" stroke="#111" font-size="4.3">$</text>
<text x="73.40" y="242.10" fill="#111" stroke="#111" font-size="4.3" textLength="17.60" lengthAdjust="spacing">2,283.00</text>
<text x="96.5" y="242.10" fill="#111" stroke="#111" font-size="4.3">$</text>
<text x="113.90" y="242.10" fill="#111" stroke="#111" font-size="4.3" textLength="17.60" lengthAdjust="spacing">1,084.00</text>
<text x="137.3" y="242.10" fill="#111" stroke="#111" font-size="4.3">$</text>
<text x="155.80" y="242.10" fill="#111" stroke="#111" font-size="4.3" textLength="17.60" lengthAdjust="spacing">5,546.00</text>
<text x="178.4" y="242.10" fill="#111" stroke="#111" font-size="4.3">$</text>
<text x="197.60" y="242.10" fill="#111" stroke="#111" font-size="4.3" textLength="17.60" lengthAdjust="spacing">7,739.00</text>
<text x="2" y="248.68" fill="#F4F7F8" stroke="#F4F7F8" font-size="4.3" textLength="29.2" lengthAdjust="spacing">Fuller, Ciara</text>
<text x="55.5" y="248.68" fill="#111" stroke="#111" font-size="4.3">$</text>
<text x="73.40" y="248.68" fill="#111" stroke="#111" font-size="4.3" textLength="17.60" lengthAdjust="spacing">5,882.00</text>
<text x="96.5" y="248.68" fill="#111" stroke="#111" font-size="4.3">$</text>
<text x="113.90" y="248.68" fill="#111" stroke="#111" font-size="4.3" textLength="17.60" lengthAdjust="spacing">5,876.00</text>
<text x="137.3" y="248.68" fill="#111" stroke="#111" font-size="4.3">$</text>
<text x="155.80" y="248.68" fill="#111" stroke="#111" font-size="4.3" textLength="17.60" lengthAdjust="spacing">4,669.00</text>
<text x="178.4" y="248.68" fill="#111" stroke="#111" font-size="4.3">$</text>
<text x="197.60" y="248.68" fill="#111" stroke="#111" font-size="4.3" textLength="17.60" lengthAdjust="spacing">8,120.00</text>
<text x="2" y="255.26" fill="#F4F7F8" stroke="#F4F7F8" font-size="4.3" textLength="36.0" lengthAdjust="spacing">O&#39;Connor, Hayden</text>
<text x="55.5" y="255.26" fill="#111" stroke="#111" font-size="4.3">$</text>
<text x="77.80" y="255.26" fill="#111" stroke="#111" font-size="4.3" textLength="13.20" lengthAdjust="spacing">463.00</text>
<text x="96.5" y="255.26" fill="#111" stroke="#111" font-size="4.3">$</text>
<text x="113.90" y="255.26" fill="#111" stroke="#111" font-size="4.3" textLength="17.60" lengthAdjust="spacing">9,756.00</text>
<text x="137.3" y="255.26" fill="#111" stroke="#111" font-size="4.3">$</text>
<text x="155.80" y="255.26" fill="#111" stroke="#111" font-size="4.3" textLength="17.60" lengthAdjust="spacing">1,092.00</text>
<text x="178.4" y="255.26" fill="#111" stroke="#111" font-size="4.3">$</text>
<text x="202.00" y="255.26" fill="#111" stroke="#111" font-size="4.3" textLength="13.20" lengthAdjust="spacing">448.00</text>
<text x="2" y="261.84" fill="#F4F7F8" stroke="#F4F7F8" font-size="4.3" textLength="31.5" lengthAdjust="spacing">Joyle, Kendall</text>
<text x="55.5" y="261.84" fill="#111" stroke="#111" font-size="4.3">$</text>
<text x="73.40" y="261.84" fill="#111" stroke="#111" font-size="4.3" textLength="17.60" lengthAdjust="spacing">6,148.00</text>
<text x="96.5" y="261.84" fill="#111" stroke="#111" font-size="4.3">$</text>
<text x="113.90" y="261.84" fill="#111" stroke="#111" font-size="4.3" textLength="17.60" lengthAdjust="spacing">4,214.00</text>
<text x="137.3" y="261.84" fill="#111" stroke="#111" font-size="4.3">$</text>
<text x="155.80" y="261.84" fill="#111" stroke="#111" font-size="4.3" textLength="17.60" lengthAdjust="spacing">7,576.00</text>
<text x="178.4" y="261.84" fill="#111" stroke="#111" font-size="4.3">$</text>
<text x="197.60" y="261.84" fill="#111" stroke="#111" font-size="4.3" textLength="17.60" lengthAdjust="spacing">4,992.00</text>
<text x="2" y="268.42" fill="#F4F7F8" stroke="#F4F7F8" font-size="4.3" textLength="24.8" lengthAdjust="spacing">Curry, Emma</text>
<text x="55.5" y="268.42" fill="#111" stroke="#111" font-size="4.3">$</text>
<text x="73.40" y="268.42" fill="#111" stroke="#111" font-size="4.3" textLength="17.60" lengthAdjust="spacing">9,810.00</text>
<text x="96.5" y="268.42" fill="#111" stroke="#111" font-size="4.3">$</text>
<text x="113.90" y="268.42" fill="#111" stroke="#111" font-size="4.3" textLength="17.60" lengthAdjust="spacing">9,954.00</text>
<text x="137.3" y="268.42" fill="#111" stroke="#111" font-size="4.3">$</text>
<text x="155.80" y="268.42" fill="#111" stroke="#111" font-size="4.3" textLength="17.60" lengthAdjust="spacing">5,343.00</text>
<text x="178.4" y="268.42" fill="#111" stroke="#111" font-size="4.3">$</text>
<text x="197.60" y="268.42" fill="#111" stroke="#111" font-size="4.3" textLength="17.60" lengthAdjust="spacing">3,006.00</text>
<text x="2" y="275.00" fill="#F4F7F8" stroke="#F4F7F8" font-size="4.3" textLength="22.5" lengthAdjust="spacing">Long, Bart</text>
<text x="55.5" y="275.00" fill="#111" stroke="#111" font-size="4.3">$</text>
<text x="73.40" y="275.00" fill="#111" stroke="#111" font-size="4.3" textLength="17.60" lengthAdjust="spacing">6,063.00</text>
<text x="96.5" y="275.00" fill="#111" stroke="#111" font-size="4.3">$</text>
<text x="113.90" y="275.00" fill="#111" stroke="#111" font-size="4.3" textLength="17.60" lengthAdjust="spacing">3,135.00</text>
<text x="137.3" y="275.00" fill="#111" stroke="#111" font-size="4.3">$</text>
<text x="155.80" y="275.00" fill="#111" stroke="#111" font-size="4.3" textLength="17.60" lengthAdjust="spacing">5,222.00</text>
<text x="178.4" y="275.00" fill="#111" stroke="#111" font-size="4.3">$</text>
<text x="197.60" y="275.00" fill="#111" stroke="#111" font-size="4.3" textLength="17.60" lengthAdjust="spacing">6,148.00</text>
<text x="2" y="281.58" fill="#F4F7F8" stroke="#F4F7F8" font-size="4.3" textLength="29.2" lengthAdjust="spacing">Harper, Alika</text>
<text x="55.5" y="281.58" fill="#111" stroke="#111" font-size="4.3">$</text>
<text x="73.40" y="281.58" fill="#111" stroke="#111" font-size="4.3" textLength="17.60" lengthAdjust="spacing">9,858.00</text>
<text x="96.5" y="281.58" fill="#111" stroke="#111" font-size="4.3">$</text>
<text x="113.90" y="281.58" fill="#111" stroke="#111" font-size="4.3" textLength="17.60" lengthAdjust="spacing">4,427.00</text>
<text x="137.3" y="281.58" fill="#111" stroke="#111" font-size="4.3">$</text>
<text x="155.80" y="281.58" fill="#111" stroke="#111" font-size="4.3" textLength="17.60" lengthAdjust="spacing">5,021.00</text>
<text x="178.4" y="281.58" fill="#111" stroke="#111" font-size="4.3">$</text>
<text x="197.60" y="281.58" fill="#111" stroke="#111" font-size="4.3" textLength="17.60" lengthAdjust="spacing">6,279.00</text>
<text x="2" y="288.16" fill="#F4F7F8" stroke="#F4F7F8" font-size="4.3" textLength="29.2" lengthAdjust="spacing">Henry, Jordan</text>
<text x="55.5" y="288.16" fill="#111" stroke="#111" font-size="4.3">$</text>
<text x="73.40" y="288.16" fill="#111" stroke="#111" font-size="4.3" textLength="17.60" lengthAdjust="spacing">1,818.00</text>
<text x="96.5" y="288.16" fill="#111" stroke="#111" font-size="4.3">$</text>
<text x="118.30" y="288.16" fill="#111" stroke="#111" font-size="4.3" textLength="13.20" lengthAdjust="spacing">541.00</text>
<text x="137.3" y="288.16" fill="#111" stroke="#111" font-size="4.3">$</text>
<text x="155.80" y="288.16" fill="#111" stroke="#111" font-size="4.3" textLength="17.60" lengthAdjust="spacing">9,426.00</text>
<text x="178.4" y="288.16" fill="#111" stroke="#111" font-size="4.3">$</text>
<text x="197.60" y="288.16" fill="#111" stroke="#111" font-size="4.3" textLength="17.60" lengthAdjust="spacing">2,253.00</text>
<text x="2" y="294.74" fill="#F4F7F8" stroke="#F4F7F8" font-size="4.3" textLength="36.0" lengthAdjust="spacing">Glover, Chandler</text>
<text x="55.5" y="294.74" fill="#111" stroke="#111" font-size="4.3">$</text>
<text x="73.40" y="294.74" fill="#111" stroke="#111" font-size="4.3" textLength="17.60" lengthAdjust="spacing">5,179.00</text>
<text x="96.5" y="294.74" fill="#111" stroke="#111" font-size="4.3">$</text>
<text x="113.90" y="294.74" fill="#111" stroke="#111" font-size="4.3" textLength="17.60" lengthAdjust="spacing">8,292.00</text>
<text x="137.3" y="294.74" fill="#111" stroke="#111" font-size="4.3">$</text>
<text x="155.80" y="294.74" fill="#111" stroke="#111" font-size="4.3" textLength="17.60" lengthAdjust="spacing">3,746.00</text>
<text x="178.4" y="294.74" fill="#111" stroke="#111" font-size="4.3">$</text>
<text x="197.60" y="294.74" fill="#111" stroke="#111" font-size="4.3" textLength="17.60" lengthAdjust="spacing">4,513.00</text>
<text x="2" y="301.32" fill="#F4F7F8" stroke="#F4F7F8" font-size="4.3" textLength="36.0" lengthAdjust="spacing">O&#39;Neil, Nicholas</text>
<text x="55.5" y="301.32" fill="#111" stroke="#111" font-size="4.3">$</text>
<text x="73.40" y="301.32" fill="#111" stroke="#111" font-size="4.3" textLength="17.60" lengthAdjust="spacing">4,010.00</text>
<text x="96.5" y="301.32" fill="#111" stroke="#111" font-size="4.3">$</text>
<text x="113.90" y="301.32" fill="#111" stroke="#111" font-size="4.3" textLength="17.60" lengthAdjust="spacing">5,470.00</text>
<text x="137.3" y="301.32" fill="#111" stroke="#111" font-size="4.3">$</text>
<text x="155.80" y="301.32" fill="#111" stroke="#111" font-size="4.3" textLength="17.60" lengthAdjust="spacing">3,170.00</text>
<text x="178.4" y="301.32" fill="#111" stroke="#111" font-size="4.3">$</text>
<text x="197.60" y="301.32" fill="#111" stroke="#111" font-size="4.3" textLength="17.60" lengthAdjust="spacing">7,230.00</text>
<text x="2" y="307.90" fill="#F4F7F8" stroke="#F4F7F8" font-size="4.3" textLength="38.2" lengthAdjust="spacing">Wilkerson, Dustin</text>
<text x="55.5" y="307.90" fill="#111" stroke="#111" font-size="4.3">$</text>
<text x="73.40" y="307.90" fill="#111" stroke="#111" font-size="4.3" textLength="17.60" lengthAdjust="spacing">1,689.00</text>
<text x="96.5" y="307.90" fill="#111" stroke="#111" font-size="4.3">$</text>
<text x="113.90" y="307.90" fill="#111" stroke="#111" font-size="4.3" textLength="17.60" lengthAdjust="spacing">1,768.00</text>
<text x="137.3" y="307.90" fill="#111" stroke="#111" font-size="4.3">$</text>
<text x="155.80" y="307.90" fill="#111" stroke="#111" font-size="4.3" textLength="17.60" lengthAdjust="spacing">9,942.00</text>
<text x="178.4" y="307.90" fill="#111" stroke="#111" font-size="4.3">$</text>
<text x="197.60" y="307.90" fill="#111" stroke="#111" font-size="4.3" textLength="17.60" lengthAdjust="spacing">5,375.00</text>
</g></svg>
<div style="position:absolute;left:768px;top:133px;width:15px;height:511px;background:#E6E6E6"></div>
<div style="position:absolute;left:768px;top:133px;width:13px;height:13px;border:1px solid #ABABAB;background:#fff"></div>
<svg style="position:absolute;left:768px;top:133px" width="15" height="15"><path d="M3.5 9 L7.5 5 L11.5 9 Z" fill="#606060"/></svg>
<div style="position:absolute;left:768px;top:148px;width:13px;height:78px;border:1px solid #ABABAB;background:#fff"></div>
<div style="position:absolute;left:768px;top:629px;width:13px;height:13px;border:1px solid #C6C6C6;background:#fff"></div>
<svg style="position:absolute;left:768px;top:629px" width="15" height="15"><path d="M3.5 6 L11.5 6 L7.5 10 Z" fill="#606060"/></svg>
<svg style="position:absolute;left:480px;top:654px" width="10" height="13"><path d="M7.5 1.5 V11 L2 6.25 Z" fill="#A6A6A6"/></svg>
<div style="position:absolute;left:496px;top:650px;width:26px;height:20px;border:1px solid #ABABAB;background:#fff"></div>
<svg style="position:absolute;left:499px;top:655px" width="10" height="12"><path d="M3.2 3.9 L5.8 1.9 V10.5" fill="none" stroke="#3a3a3a" stroke-width="1.15"/></svg>
<div class="t" id="of6" style="left:527.00px;top:654.34px;font-size:12px;line-height:14px;color:#444;">of 6</div>
<svg style="position:absolute;left:555px;top:654px" width="10" height="13"><path d="M2 1.5 V11 L7.5 6.25 Z" fill="#404040"/></svg>
<svg style="position:absolute;left:740px;top:648px" width="49" height="28">
<rect x="5.5" y="5.5" width="12" height="14" fill="#fff" stroke="#666" stroke-width="1.2"/>
<path d="M8.5 5.5 V19.5 M14.5 5.5 V19.5 M5.5 8.5 H17.5 M5.5 16.5 H17.5" stroke="#4a7fc1" stroke-width="1"/>
<rect x="23.5" y="2.5" width="21" height="21" fill="#8FCBA4" stroke="#3C9F5F" stroke-width="1.2"/>
<rect x="26.8" y="5.7" width="13.4" height="13.6" fill="#fff" stroke="#666" stroke-width="1.2"/>
<rect x="30.4" y="9.4" width="6.2" height="6.2" fill="none" stroke="#666" stroke-width="1.2"/>
<path d="M31.3 8.3 L33.3 6.2 L35.3 8.3 Z M31.3 16.8 L33.3 18.9 L35.3 16.8 Z M29.2 10.6 L27.2 12.6 L29.2 14.6 Z M37.8 10.6 L39.8 12.6 L37.8 14.6 Z" fill="#4a7fc1"/>
</svg>
</body></html>
